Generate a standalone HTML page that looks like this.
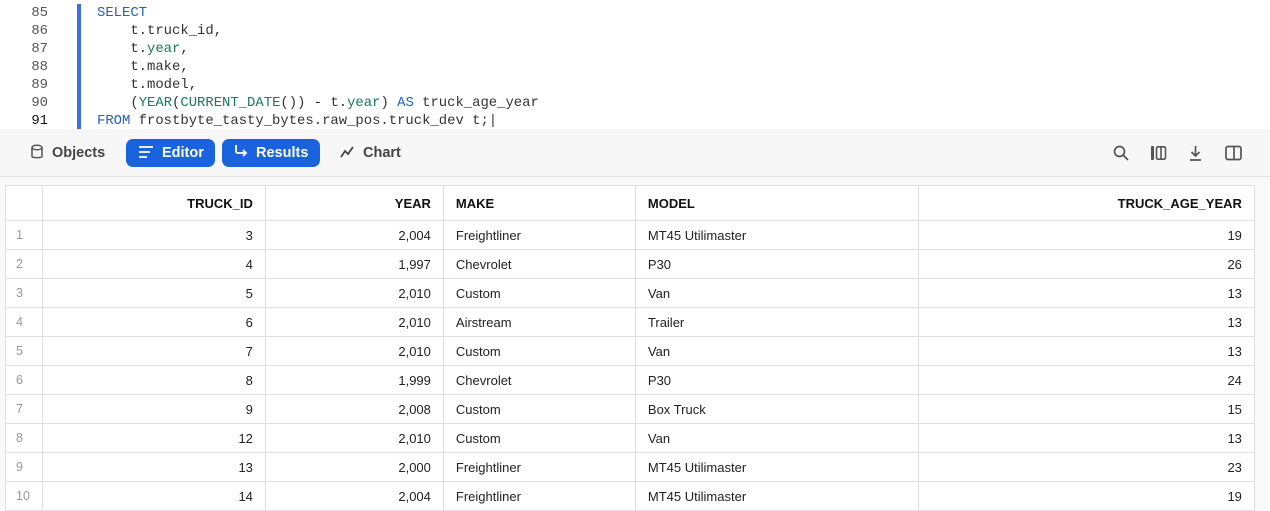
<!DOCTYPE html>
<html><head><style>
body{margin:0;width:1270px;height:510px;overflow:hidden;background:#f9f9f9;font-family:"Liberation Sans",sans-serif;position:relative}
.ed{position:absolute;left:0;top:0;width:1270px;height:129px;background:#fff;border-bottom:1px solid #e2e2e2}
.ln{position:absolute;left:0;width:48px;text-align:right;font:13.9px "Liberation Mono",monospace;color:#555}
.cd{position:absolute;left:97px;font:13.9px "Liberation Mono",monospace;color:#333;white-space:pre}
.kw{color:#1f5fd1}.fn{color:#1a7a5a}
.bar{position:absolute;left:77px;top:4px;width:4px;height:125px;background:#3b6ee8}
.tb{position:absolute;top:129px;left:0;width:1270px;height:47px;background:#f7f7f7;border-bottom:1px solid #e2e2e2}
.btn{position:absolute;top:10px;height:28px;border-radius:7px;font-size:14.5px;font-weight:bold;line-height:28px;color:#444}
.btn.on{background:#1a63de;color:#fff}
table{position:absolute;left:5px;top:185px;border-collapse:collapse;background:#fff;font-size:13px;color:#222}
td{border:1px solid #e0e0e0;height:29px;padding:0 12px;box-sizing:border-box}
tr.h td{height:35px;font-weight:bold;color:#111}
td.r{text-align:right}
td.n{color:#999;padding-left:10px;font-size:12.5px}
</style></head><body>
<div class="ed">
<div class="bar"></div>
<div class="ln" style="top:5px">85</div><div class="cd" style="top:5px"><span class="kw">SELECT</span></div>
<div class="ln" style="top:23px">86</div><div class="cd" style="top:23px">    t.truck_id,</div>
<div class="ln" style="top:41px">87</div><div class="cd" style="top:41px">    t.<span class="fn">year</span>,</div>
<div class="ln" style="top:59px">88</div><div class="cd" style="top:59px">    t.make,</div>
<div class="ln" style="top:77px">89</div><div class="cd" style="top:77px">    t.model,</div>
<div class="ln" style="top:95px">90</div><div class="cd" style="top:95px">    (<span class="fn">YEAR</span>(<span class="fn">CURRENT_DATE</span>()) - t.<span class="fn">year</span>) <span class="kw">AS</span> truck_age_year</div>
<div class="ln" style="top:113px;color:#111">91</div><div class="cd" style="top:113px"><span class="kw">FROM</span> frostbyte_tasty_bytes.raw_pos.truck_dev t;|</div>
</div>
<div class="tb">
<div class="btn" style="left:30px"><svg width="14" height="16" viewBox="0 0 14 16" style="vertical-align:-3px;margin-right:8px"><ellipse cx="7" cy="3.5" rx="5" ry="2.3" fill="none" stroke="#555" stroke-width="1.5"/><path d="M2 3.5V12.5C2 14 12 14 12 12.5V3.5" fill="none" stroke="#555" stroke-width="1.5"/></svg>Objects</div>
<div class="btn on" style="left:126px;width:89px"><svg width="14" height="12" viewBox="0 0 14 12" style="margin:0 9px 0 13px;vertical-align:-1px"><path d="M0 1H14M0 6H11M0 11H8" stroke="#fff" stroke-width="1.8"/></svg>Editor</div>
<div class="btn on" style="left:222px;width:98px"><svg width="14" height="14" viewBox="0 0 14 14" style="margin:0 8px 0 12px;vertical-align:-1px"><path d="M2 1V7Q2 9 4 9H12M9 6L12 9L9 12" fill="none" stroke="#fff" stroke-width="1.8"/></svg>Results</div>
<div class="btn" style="left:340px"><svg width="14" height="12" viewBox="0 0 14 12" style="margin-right:9px;vertical-align:-1px"><path d="M1 11L5 5L8 8L13 1" fill="none" stroke="#444" stroke-width="1.8"/></svg>Chart</div>
<svg style="position:absolute;left:1113px;top:16px" width="16" height="16" viewBox="0 0 16 16"><circle cx="6.5" cy="6.5" r="5" fill="none" stroke="#555" stroke-width="1.7"/><path d="M10 10L15 15" stroke="#555" stroke-width="1.8"/></svg>
<svg style="position:absolute;left:1150px;top:16px" width="17" height="16" viewBox="0 0 17 16"><rect x="1" y="1" width="3" height="14" rx="1" fill="#555"/><rect x="6.5" y="1.8" width="9" height="12.4" rx="1.5" fill="none" stroke="#555" stroke-width="1.6"/><path d="M11 2V14" stroke="#555" stroke-width="1.6"/></svg>
<svg style="position:absolute;left:1189px;top:16px" width="13" height="16" viewBox="0 0 13 16"><path d="M6.5 1V11M2.5 7L6.5 11L10.5 7M1 15H12" fill="none" stroke="#555" stroke-width="1.7"/></svg>
<svg style="position:absolute;left:1225px;top:16px" width="17" height="16" viewBox="0 0 17 16"><rect x="1" y="1.5" width="15" height="13" rx="2" fill="none" stroke="#555" stroke-width="1.7"/><path d="M9 2V14" stroke="#555" stroke-width="1.7"/></svg>
</div>
<table>
<colgroup><col style="width:36px"><col style="width:223px"><col style="width:178px"><col style="width:192px"><col style="width:283px"><col style="width:336px"></colgroup>
<tr class="h"><td></td><td class="r">TRUCK_ID</td><td class="r">YEAR</td><td>MAKE</td><td>MODEL</td><td class="r">TRUCK_AGE_YEAR</td></tr>
<tr><td class="n">1</td><td class="r">3</td><td class="r">2,004</td><td>Freightliner</td><td>MT45 Utilimaster</td><td class="r">19</td></tr>
<tr><td class="n">2</td><td class="r">4</td><td class="r">1,997</td><td>Chevrolet</td><td>P30</td><td class="r">26</td></tr>
<tr><td class="n">3</td><td class="r">5</td><td class="r">2,010</td><td>Custom</td><td>Van</td><td class="r">13</td></tr>
<tr><td class="n">4</td><td class="r">6</td><td class="r">2,010</td><td>Airstream</td><td>Trailer</td><td class="r">13</td></tr>
<tr><td class="n">5</td><td class="r">7</td><td class="r">2,010</td><td>Custom</td><td>Van</td><td class="r">13</td></tr>
<tr><td class="n">6</td><td class="r">8</td><td class="r">1,999</td><td>Chevrolet</td><td>P30</td><td class="r">24</td></tr>
<tr><td class="n">7</td><td class="r">9</td><td class="r">2,008</td><td>Custom</td><td>Box Truck</td><td class="r">15</td></tr>
<tr><td class="n">8</td><td class="r">12</td><td class="r">2,010</td><td>Custom</td><td>Van</td><td class="r">13</td></tr>
<tr><td class="n">9</td><td class="r">13</td><td class="r">2,000</td><td>Freightliner</td><td>MT45 Utilimaster</td><td class="r">23</td></tr>
<tr><td class="n">10</td><td class="r">14</td><td class="r">2,004</td><td>Freightliner</td><td>MT45 Utilimaster</td><td class="r">19</td></tr>
</table>
</body></html>
